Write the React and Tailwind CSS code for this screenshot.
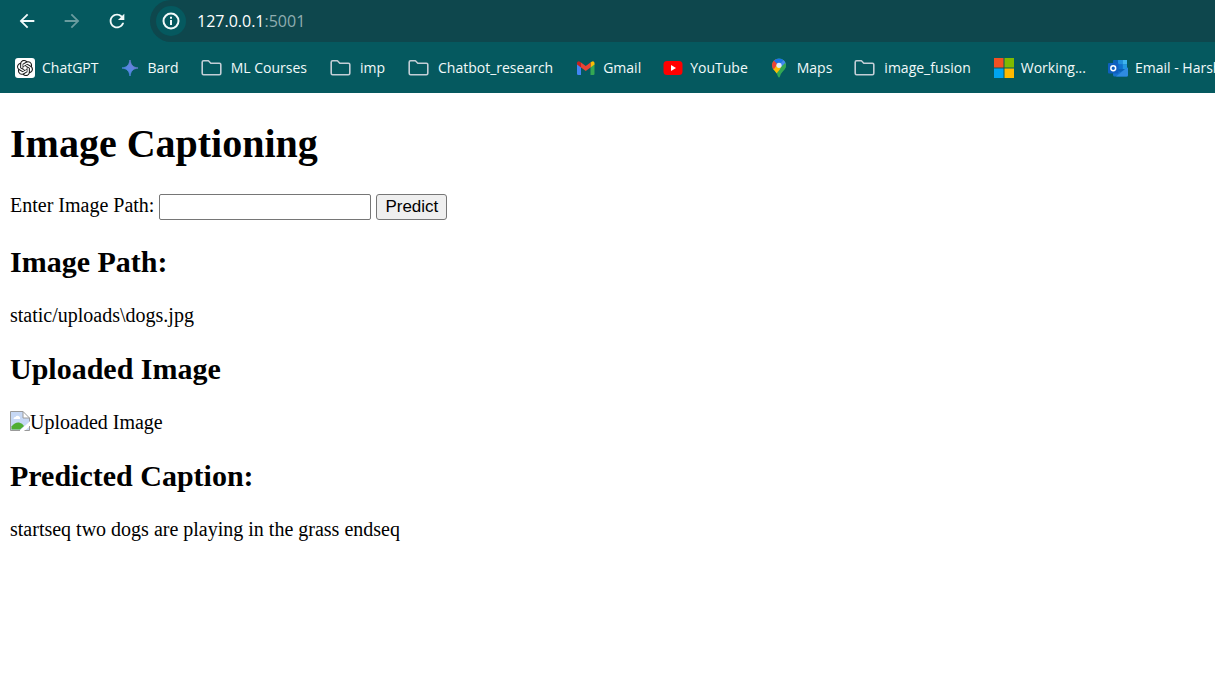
import React from "react";
import { SiOpenai } from "react-icons/si";
import { MdArrowBack, MdArrowForward, MdRefresh } from "react-icons/md";

function ChatGptIcon() {
  return (
    <span className="flex size-5 items-center justify-center rounded-[3px] bg-white text-[#1c1c1c]">
      <SiOpenai className="size-4" />
    </span>
  );
}

function InfoIcon() {
  return (
    <svg viewBox="0 0 20 20" className="size-5" fill="none" stroke="currentColor" strokeWidth="2">
      <circle cx="10" cy="10" r="7.500" />
      <path d="M10 9V14M10 5.800V7.800" />
    </svg>
  );
}

function BardIcon() {
  return (
    <svg viewBox="0 0 20 20" className="size-5">
      <defs>
        <linearGradient id="bard" x1="0" y1="1" x2="1" y2="0">
          <stop offset="0" stopColor="#3f86e6" />
          <stop offset="0.5" stopColor="#5b86e0" />
          <stop offset="1" stopColor="#7f74c8" />
        </linearGradient>
      </defs>
      <path d="M9 2C9.800 7 12 9.300 17 10C12 10.700 9.800 13 9 18C8.200 13 6 10.700 1 10C6 9.300 8.200 7 9 2Z" fill="url(#bard)" stroke="url(#bard)" strokeWidth="0.800" strokeLinejoin="round" />
    </svg>
  );
}

function FolderIcon() {
  return (
    <svg viewBox="0 0 22 20" className="h-5 w-[22px]" fill="none" stroke="#c3ced6" strokeWidth="1.600" strokeLinejoin="round">
      <path d="M1.200 4.200Q1.200 2.800 2.600 2.800H7.400L9.800 5.200H18.400Q19.800 5.200 19.800 6.600V15.300Q19.800 16.700 18.400 16.700H2.600Q1.200 16.700 1.200 15.300Z" />
    </svg>
  );
}

function GmailIcon() {
  return (
    <svg viewBox="0 0 20 20" className="size-5">
      <path d="M1 5.500L5 8.500V17H2.200Q1 17 1 15.800Z" fill="#4285f4" />
      <path d="M14.500 8.500L18.500 5.500V15.800Q18.500 17 17.300 17H14.500Z" fill="#34a853" />
      <path d="M14.500 4.500L15.600 3.700Q16.600 3 17.600 3.500Q18.500 4 18.500 5V6.500L14.500 9.600Z" fill="#fbbc04" />
      <path d="M5 4.500L9.750 8.100L14.500 4.500V9.500L9.750 13.100L5 9.500Z" fill="#ea4335" />
      <path d="M1 5Q1 4 1.900 3.500Q2.900 3 3.900 3.700L5 4.500V9.600L1 6.500Z" fill="#c5221f" />
    </svg>
  );
}

function YouTubeIcon() {
  return (
    <svg viewBox="0 0 20 20" className="size-5">
      <rect x="0.500" y="3" width="19" height="14" rx="3.500" fill="#f00" />
      <path d="M8 7V13L13 10Z" fill="#fff" />
    </svg>
  );
}

function MapsIcon() {
  return (
    <svg viewBox="0 0 20 20" className="size-5">
      <defs>
        <clipPath id="pin">
          <path d="M9 0.500C5 0.500 2 3.500 2 7.300C2 12 6.500 13 8 18.500Q9 20.300 10 18.500C11.500 13 16 12 16 7.300C16 3.500 13 0.500 9 0.500Z" />
        </clipPath>
      </defs>
      <g clipPath="url(#pin)">
        <rect width="20" height="20" fill="#34a853" />
        <path d="M0 13L9 3L13 8L5.500 16.500Z" fill="#fbbc04" />
        <path d="M0 0H5L9 4L4 11L0 10Z" fill="#ea4335" />
        <path d="M3.600 2.500L7 5.800L9 7.300L14.500 1L9 -1Z" fill="#1a73e8" />
        <path d="M9 7.300L14 1.500L17 6L11 9Z" fill="#4285f4" />
        <path d="M11 9L15.600 4.500L18 8L12 14L7 18Z" fill="#34a853" />
      </g>
      <circle cx="9" cy="7.300" r="2.600" fill="#dceefb" />
    </svg>
  );
}

function MicrosoftIcon() {
  return (
    <svg viewBox="0 0 20 20" className="size-5">
      <rect width="9.500" height="9.500" fill="#f25022" />
      <rect x="10.500" width="9.500" height="9.500" fill="#7fba00" />
      <rect y="10.500" width="9.500" height="9.500" fill="#00a4ef" />
      <rect x="10.500" y="10.500" width="9.500" height="9.500" fill="#ffb900" />
    </svg>
  );
}

function OutlookIcon() {
  return (
    <svg viewBox="0 0 20 20" className="size-5">
      <rect x="5" y="2" width="14" height="12" rx="1" fill="#0a62b8" />
      <rect x="10" y="2" width="4.700" height="4.500" fill="#1f8fdc" />
      <rect x="14.700" y="2" width="4.300" height="4.500" fill="#3fb4ee" />
      <rect x="10" y="6.500" width="4.700" height="4.500" fill="#0f70cc" />
      <rect x="14.700" y="6.500" width="4.300" height="4.500" fill="#2196e0" />
      <path d="M5 10L12.500 14L20 9.500V17Q20 18.500 18.500 18.500H6.500Q5 18.500 5 17Z" fill="#1673cf" />
      <path d="M20 9.500V17Q20 18.500 18.500 18.500H8L17 11.300Z" fill="#2f8be2" />
      <rect x="0" y="5" width="10.500" height="10.500" rx="1" fill="#0f5fc0" />
      <circle cx="5.250" cy="10.250" r="2.400" fill="none" stroke="#fff" strokeWidth="1.500" />
    </svg>
  );
}

function BrokenImageIcon() {
  return (
    <svg viewBox="0 0 20 20" className="size-5 shrink-0">
      <path d="M0.500 0.500H13L19.500 7V11L10 19.500H0.500Z" fill="#c6d8f5" />
      <path d="M3.500 8Q3.500 6 5.500 6Q6.500 4 8.500 5Q10.500 5.500 10 8Z" fill="#fff" />
      <path d="M1.500 18.500V15.500Q5 11 9 11.500Q12.500 12 14 15L10 18.500Z" fill="#4fae33" />
      <path d="M9.500 20L20 10.500V14.500L14.500 20Z" fill="#fff" />
      <path d="M15 19.500L19.500 15.500V19.500Z" fill="#c6d8f5" />
      <path d="M13 0.500V7H19.500Z" fill="#fff" />
      <path d="M10 19.500H0.500V0.500H13L19.500 7V10.500M13 0.500V7H19.500M14.500 19.500H19.500V15" fill="none" stroke="#9a9a9a" />
    </svg>
  );
}

const bookmarks = [
  { label: "ChatGPT", Icon: ChatGptIcon },
  { label: "Bard", Icon: BardIcon },
  { label: "ML Courses", Icon: FolderIcon, folder: true },
  { label: "imp", Icon: FolderIcon, folder: true },
  { label: "Chatbot_research", Icon: FolderIcon, folder: true },
  { label: "Gmail", Icon: GmailIcon },
  { label: "YouTube", Icon: YouTubeIcon },
  { label: "Maps", Icon: MapsIcon },
  { label: "image_fusion", Icon: FolderIcon, folder: true },
  { label: "Working...", Icon: MicrosoftIcon },
  { label: "Email - Harsh", Icon: OutlookIcon },
];

function Bookmark({ label, Icon, folder }) {
  const look = folder ? "flex shrink-0 items-center gap-2 pr-px" : "flex shrink-0 items-center gap-[7px]";
  const content = (
    <>
      <Icon />
      <span>{label}</span>
    </>
  );
  return folder ? (
    <button type="button" className={look}>{content}</button>
  ) : (
    <a href="#" className={look}>{content}</a>
  );
}

function BrowserBar() {
  return (
    <header className="overflow-hidden bg-[#05595f] font-['Open_Sans',sans-serif] text-[#f2fafa]">
      <div className="flex h-[42px] items-center">
        <div className="flex items-center gap-[23px] pl-4">
          <button type="button" aria-label="Back"><MdArrowBack className="size-[22px]" /></button>
          <button type="button" aria-label="Forward" className="text-[#6a9c9f]"><MdArrowForward className="size-[22px]" /></button>
          <button type="button" aria-label="Reload"><MdRefresh className="size-[22px]" /></button>
        </div>
        <div className="ml-[22px] flex h-[42px] grow items-center gap-[11px] rounded-l-full bg-[#0e474d] pl-[6px]">
          <button type="button" aria-label="Site information" className="flex size-[30px] items-center justify-center rounded-full bg-[#05595f]">
            <InfoIcon />
          </button>
          <div className="text-base"><span className="text-white">127.0.0.1</span><span className="text-[#8fadb0]">:5001</span></div>
        </div>
      </div>
      <nav aria-label="Bookmarks" className="flex h-[51px] items-center gap-[22px] pl-[15px] text-sm whitespace-nowrap">
        {bookmarks.map((b) => <Bookmark key={b.label} {...b} />)}
      </nav>
    </header>
  );
}

export default function App() {
  return (
    <div className="min-h-screen bg-white text-black">
      <BrowserBar />
      <main className="px-[10px] pt-7 font-['Liberation_Serif',serif] text-xl leading-[23px]">
        <h1 className="mb-[27px] text-[40px] leading-[46px] font-bold">Image Captioning</h1>
        <form className="flex items-start gap-[5px]" onSubmit={(e) => e.preventDefault()}>
          <label htmlFor="image-path">Enter Image Path:</label>
          <input id="image-path" type="text" className="h-[26px] w-[212px] rounded-[2px] border border-[#767676] bg-white px-[2px] font-['Liberation_Sans',sans-serif] text-base" />
          <button type="submit" className="h-[26px] rounded-[3px] border border-[#767676] bg-[#efefef] px-2 font-['Liberation_Sans',sans-serif] text-[17px] leading-5">Predict</button>
        </form>
        <h2 className="my-[25px] text-3xl leading-[34px] font-bold">Image Path:</h2>
        <p>static/uploads\dogs.jpg</p>
        <h2 className="my-[25px] text-3xl leading-[34px] font-bold">Uploaded Image</h2>
        <div className="flex items-start">
          <BrokenImageIcon />
          <span>Uploaded Image</span>
        </div>
        <h2 className="my-[25px] text-3xl leading-[34px] font-bold">Predicted Caption:</h2>
        <p>startseq two dogs are playing in the grass endseq</p>
      </main>
    </div>
  );
}
